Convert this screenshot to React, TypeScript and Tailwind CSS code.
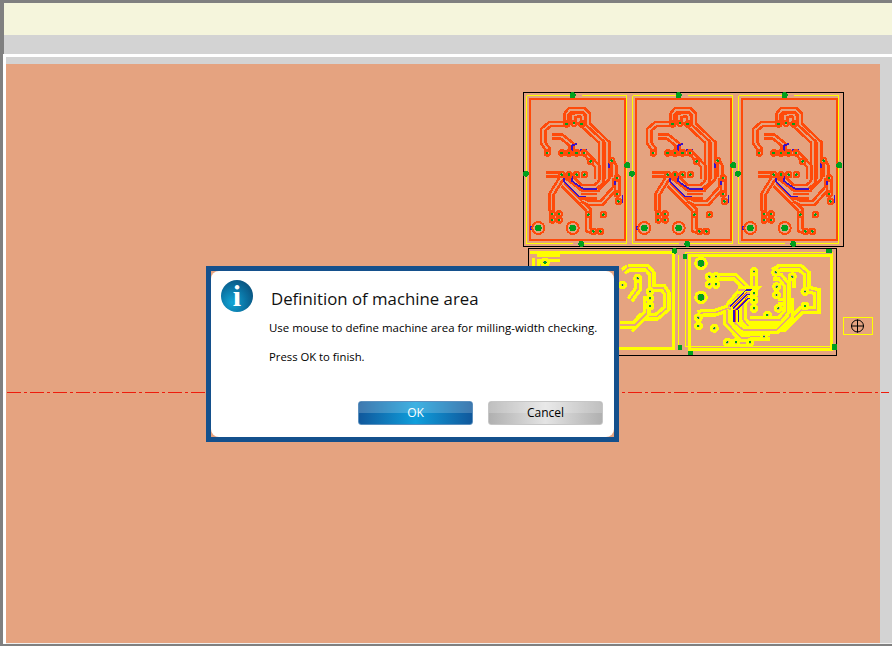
import React from 'react';

const PEACH = '#e5a380';
const ORANGE = '#ff4a0a';
const YELLOW = '#ffff00';
const GREEN = '#00a01e';

// Track drawn as in CAM view: wide coloured line with a hollow centre
function Track({ d, color, w = 20, inner = 5 }: { d: string; color: string; w?: number; inner?: number }) {
  return (
    <>
      <path d={d} fill="none" stroke={color} strokeWidth={w} strokeLinejoin="miter" />
      <path d={d} fill="none" stroke={PEACH} strokeWidth={inner} strokeLinejoin="miter" />
    </>
  );
}

function Pad({ x, y, r = 8, hole = 4, color = ORANGE, ring = 7 }: { x: number; y: number; r?: number; hole?: number; color?: string; ring?: number }) {
  return (
    <>
      <circle cx={x} cy={y} r={r} fill={PEACH} stroke={color} strokeWidth={ring} />
      <circle cx={x} cy={y} r={hole} fill={GREEN} />
    </>
  );
}

const orangeTracks = [
  'M140 108V78L150 66H190L204 80V110L262 165V270L232 303H190L135 262',
  'M160 108V84L172 80H185L190 90V112L244 162V282L224 298H182L150 265',
  'M140 108H90L70 125V165L82 182V195',
  'M95 146H125L155 170V195',
  'M125 195H195L232 235V272L228 275',
  'M78 260H125',
  'M125 270L95 318V370',
  'M130 290L205 365V425L218 430',
  'M185 335L205 345H245L285 300V270',
  'M275 218L283 235V268',
  'M292 270V318',
  'M184 325H232',
];

const pads = [
  [140, 108], [162, 106], [185, 108], [125, 195], [147, 195], [170, 195], [193, 195], [212, 220],
  [125, 260], [147, 260], [170, 260], [193, 260], [275, 218], [292, 270], [292, 318], [295, 340],
  [97, 378], [118, 378], [97, 396], [118, 396], [250, 380], [220, 430], [241, 430], [205, 380], [82, 195],
];

const violet = [
  'M157 190V172L170 168', 'M180 187H200', 'M133 265V282L178 326H198', 'M157 265V280L190 303H232', 'M268 226V240',
  'M285 275V292', 'M308 320V345', 'M33 414V426',
];

function OrangeBoard({ dx }: { dx: number }) {
  return (
    <g transform={`translate(${520 + dx} 88) scale(0.3333)`}>
      <path d="M150 23H20V467H160M190 467H320V240M320 220V23H185" fill="none" stroke={YELLOW} strokeWidth={3} />
      <rect x="29" y="32" width="286" height="424" fill="none" stroke={ORANGE} strokeWidth={6} />
      {orangeTracks.map((d) => <Track key={d} d={d} color={ORANGE} />)}
      {violet.map((d) => <path key={d} d={d} fill="none" stroke="#3a10c8" strokeWidth={5} />)}
      {pads.map(([x, y]) => <Pad key={`${x}-${y}`} x={x} y={y} />)}
      <Pad x={55} y={420} r={18} hole={10} ring={6} />
      <Pad x={158} y={420} r={18} hole={10} ring={6} />
      <circle cx={158} cy={22} r={9} fill={GREEN} />
      <circle cx={184} cy={468} r={9} fill={GREEN} />
      <circle cx={18} cy={257} r={9} fill={GREEN} />
      <circle cx={322} cy={232} r={9} fill={GREEN} />
    </g>
  );
}

const yellowTracks = [
  'M300 95H375L405 125L355 185',
  'M432 80V130',
  'M265 208L280 203H315L355 190',
  'M352 195V235L395 280H420',
  'M385 135H430L400 170V225L420 250H520L575 195H620V140L600 135H580',
  'M368 185L410 145H430',
  'M376 190V235L400 255H500L540 215V170H505',
  'M420 225H510L530 200V120L510 95H490',
  'M490 80L510 68H570L590 85V125',
  'M545 95V130',
  'M350 295H420M420 275H480',
];

const yellowPads = [
  [298, 95], [318, 95], [298, 118], [318, 118], [432, 80], [432, 145], [432, 165], [432, 190], [472, 210],
  [265, 218], [265, 243], [313, 250], [352, 292], [378, 292], [420, 292], [462, 275],
  [497, 82], [500, 125], [500, 150], [505, 190], [547, 95], [585, 140], [585, 183],
];

// Right-hand yellow board, zoom coordinates of the crop at 610,245
function YellowBoards() {
  return (
    <g transform="translate(610 245) scale(0.3333)">
      <path d="M-240 22H190V312H-240" fill="none" stroke={YELLOW} strokeWidth={9} />
      <path d="M207 30V306" fill="none" stroke={YELLOW} strokeWidth={3} />
      <path d="M228 22V306H668V22Z" fill="none" stroke={YELLOW} strokeWidth={3} />
      <rect x="238" y="31" width="426" height="283" fill="none" stroke={YELLOW} strokeWidth={9} />
      {yellowTracks.map((d) => <Track key={d} d={d} color={YELLOW} w={24} inner={5} />)}
      <path d="M360 185L408 135H430M370 190L412 148H428M380 195L415 160H428M372 195V230M385 195V230" fill="none" stroke="#3a10c8" strokeWidth={4} />
      <path d="M366 185L410 142M376 195L414 154M378 195V232" fill="none" stroke={ORANGE} strokeWidth={3} />
      {yellowPads.map(([x, y]) => <Pad key={`${x}-${y}`} x={x} y={y} r={9} hole={3} color={YELLOW} ring={9} />)}
      <Pad x={273} y={55} r={16} hole={10} color={YELLOW} ring={9} />
      <Pad x={273} y={157} r={16} hole={10} color={YELLOW} ring={9} />
      {/* left board, the part that shows beside the dialog */}
      <Track d="M55 68H110L125 85V130H160L170 145V190L140 215H95L60 255" color={YELLOW} w={24} inner={5} />
      <Track d="M40 80L55 68M85 95V130L60 165" color={YELLOW} w={24} inner={5} />
      <Track d="M30 240H75L110 205V165H125" color={YELLOW} w={24} inner={5} />
      {[[120, 140], [120, 160], [120, 183], [83, 100], [38, 120]].map(([x, y]) => <Pad key={`${x}-${y}`} x={x} y={y} r={9} hole={3} color={YELLOW} ring={9} />)}
      <Track d="M-220 40H-150M-222 40V90" color={YELLOW} w={24} inner={5} />
      <Pad x={-195} y={52} r={10} hole={5} color={YELLOW} ring={9} />
      <circle cx={194} cy={18} r={8} fill={GREEN} />
      <rect x="219" y="27" width="13" height="15" fill={GREEN} />
      <rect x="204" y="299" width="13" height="16" fill={GREEN} />
      <rect x="234" y="317" width="15" height="12" fill={GREEN} />
      <rect x="648" y="12" width="17" height="12" fill={GREEN} />
      <rect x="666" y="298" width="14" height="16" fill={GREEN} />
    </g>
  );
}

function CamDrawing() {
  return (
    <svg className="absolute left-0 top-0" width={892} height={646} shapeRendering="crispEdges">
      <rect x="523.5" y="92.5" width="320" height="154" fill="none" stroke="#000" />
      <rect x="528.5" y="248.5" width="308" height="107" fill="none" stroke="#000" />
      <OrangeBoard dx={0} />
      <OrangeBoard dx={106} />
      <OrangeBoard dx={212} />
      <YellowBoards />
      <rect x="843.5" y="317.5" width="29" height="17" fill="none" stroke={YELLOW} />
      <g shapeRendering="auto" fill="none" stroke="#000">
        <circle cx="857.5" cy="326" r="6" />
        <path d="M851 326H864M857.5 319.5V332.5" />
      </g>
      <path d="M7 392.5H889" stroke="#ee1c0c" strokeDasharray="14 3 3 3" />
    </svg>
  );
}

function DialogButton({ label, primary }: { label: string; primary?: boolean }) {
  return (
    <button
      className={`relative h-[24px] w-[115px] rounded-[3px] border text-[12px] bg-linear-to-r ${
        primary
          ? 'border-[#5b8fbd] from-[#10589c] via-[#0f9fdc] to-[#10589c] text-white'
          : 'border-[#c6c6c6] from-[#b0b0b0] via-[#e4e4e4] to-[#b0b0b0] text-black'
      }`}
    >
      <span className="absolute inset-x-0 top-0 h-[11px] rounded-t-[3px] bg-white/20" />
      <span className="relative">{label}</span>
    </button>
  );
}

function InfoIcon() {
  return (
    <div className="flex h-[32px] w-[32px] items-center justify-center rounded-full bg-radial-[at_35%_70%] from-[#12a6d6] via-[#0a6f9f] to-[#0b3f68] font-['Liberation_Serif',serif] text-[30px] font-bold leading-none text-white">
      i
    </div>
  );
}

export default function App() {
  return (
    <div className="relative flex h-[646px] w-[892px] flex-col overflow-hidden bg-[#808080] pl-[4px] pt-[3px] font-['Open_Sans','Noto_Sans',sans-serif]">
      <div className="h-[32px] shrink-0 bg-[#f5f5dc]" />
      <div className="h-[19px] shrink-0 bg-[#d3d3d3]" />
      {/* work area with its white frame */}
      <div className="-ml-px flex h-[589px] shrink-0 flex-col border-l-[3px] border-t-[3px] border-white bg-[#d3d3d3]">
        <div className="h-[7px] shrink-0" />
        <div className="flex flex-1">
          <div className="h-full w-[874px] bg-[#e5a380]" />
        </div>
      </div>
      <div className="-ml-px h-px border-l-[3px] border-white bg-[#f0f0f0]" />

      <CamDrawing />

      <div className="absolute left-[206px] top-[266px] h-[176px] w-[413px] border-[5px] border-[#14508c]">
        <div className="flex h-full flex-col rounded-[8px] bg-white pl-[58px] pr-[11px]">
          <div className="absolute left-[10px] top-[9px]">
            <InfoIcon />
          </div>
          <div className="mt-[16px] whitespace-nowrap pl-[2px] text-[16.8px] leading-[24px] text-[#111]">Definition of machine area</div>
          <div className="mt-[9px] whitespace-nowrap text-[11.45px] leading-[16px] text-black">
            Use mouse to define machine area for milling-width checking.
          </div>
          <div className="mt-[13px] text-[11.3px] leading-[16px] text-black">Press OK to finish.</div>
          <div className="mt-auto mb-[12px] flex justify-end gap-[15px]">
            <DialogButton label="OK" primary />
            <DialogButton label="Cancel" />
          </div>
        </div>
      </div>
    </div>
  );
}
